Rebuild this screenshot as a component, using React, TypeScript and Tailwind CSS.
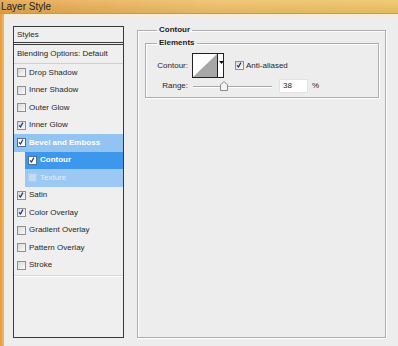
import React from "react";

type Row = {
  label: string;
  checked?: boolean;
  state?: "parent" | "active" | "disabled";
};

const rows: Row[] = [
  { label: "Drop Shadow" },
  { label: "Inner Shadow" },
  { label: "Outer Glow" },
  { label: "Inner Glow", checked: true },
  { label: "Bevel and Emboss", checked: true, state: "parent" },
  { label: "Contour", checked: true, state: "active" },
  { label: "Texture", state: "disabled" },
  { label: "Satin", checked: true },
  { label: "Color Overlay", checked: true },
  { label: "Gradient Overlay" },
  { label: "Pattern Overlay" },
  { label: "Stroke" },
];

const CheckBox = ({ checked, tone = "normal" }: { checked?: boolean; tone?: "normal" | "white" | "disabled" }) => {
  const box =
    tone === "white"
      ? "bg-white border-[#4d6f96]"
      : tone === "disabled"
      ? "bg-[#c4daf1] border-[#b2cbe4]"
      : "bg-gradient-to-br from-[#d9d9d9] to-[#fbfbfb] border-[#8e8f8f]";
  return (
    <span className={`relative w-[9px] h-[9px] shrink-0 border ${box}`}>
      {checked && (
        <svg viewBox="0 0 9 9" className="absolute inset-0 w-[7px] h-[7px]">
          <path d="M1.3 4.2 L3.2 6.4 L6.3 0.8" fill="none" stroke="#1f2f86" strokeWidth="1.5" />
        </svg>
      )}
    </span>
  );
};

const StyleRow = ({ row }: { row: Row }) => {
  if (row.state === "active" || row.state === "disabled") {
    const active = row.state === "active";
    return (
      <div className="h-[17.5px] pl-[11px] flex">
        <div
          className={`flex-1 flex items-center gap-[3px] pl-[3px] ${
            active ? "bg-[#3d97ed] text-white font-bold" : "bg-[#9cc9f3] text-[#e3eefa]"
          }`}
        >
          <CheckBox checked={row.checked} tone={active ? "white" : "disabled"} />
          <span>{row.label}</span>
        </div>
      </div>
    );
  }
  const parent = row.state === "parent";
  return (
    <div
      className={`h-[17.5px] flex items-center gap-[3px] pl-[3px] ${
        parent ? "bg-[#92c3f1] text-white font-bold" : "text-[#262626]"
      }`}
    >
      <CheckBox checked={row.checked} tone={parent ? "white" : "normal"} />
      <span>{row.label}</span>
    </div>
  );
};

const etched = "border border-[#adadad] shadow-[inset_1px_1px_0_#ffffff,1px_1px_0_#ffffff]";

export default function App() {
  return (
    <div
      className="w-[398px] h-[346px] flex flex-col overflow-hidden bg-[#ededed] text-[8px] text-[#262626]"
      style={{ fontFamily: '"Liberation Sans", Arial, sans-serif' }}
    >
      {/* title bar */}
      <div className="h-[14px] shrink-0 bg-gradient-to-r from-[#e6a54c] via-[#efc06a] to-[#f0c666] border-b border-[#c9964f]">
        <div className="h-full bg-gradient-to-b from-white/10 to-black/5 pl-[1px] text-[10px] leading-[13px] text-[#1c1c1c]">
          Layer Style
        </div>
      </div>
      <div className="flex flex-1">
        <div className="w-[4px] bg-gradient-to-r from-[#e29a3e] to-[#eeb866]" />
        <div className="flex-1 flex flex-col">
          <div className="h-[4px] bg-[#f6ecdc]" />
          <div className="flex items-start pl-[9px] pt-[8px]">
            {/* styles list */}
            <div className="w-[111px] h-[312px] border border-[#3a3a3a] bg-[#efefef] flex flex-col">
              <div className="h-[18px] pl-[3px] flex items-center border-b-[3px] border-double border-[#3a3a3a]">
                Styles
              </div>
              <div className="h-[19px] pl-[3px] flex items-center border-b border-[#cfcfcf]">
                Blending Options: Default
              </div>
              {rows.map((r) => (
                <StyleRow key={r.label} row={r} />
              ))}
              <div className="h-[1px] mt-[1px] bg-[#d6d6d6] shadow-[0_1px_0_#ffffff]" />
            </div>

            {/* contour panel */}
            <fieldset className={`ml-[13px] mt-[-1px] w-[249px] h-[313px] px-[7px] pr-[6px] pt-[3px] ${etched}`}>
              <legend className="ml-[12px] px-[2px] leading-[10px] font-bold text-[#1c1c1c]">Contour</legend>
              <fieldset className={`pb-[4px] ${etched}`}>
                <legend className="ml-[11px] px-[2px] leading-[10px] font-bold text-[#1c1c1c]">Elements</legend>
                <div className="pt-[5px] pl-[8px] flex flex-col">
                  <div className="h-[25px] flex items-center">
                    <span className="w-[34px] text-right">Contour:</span>
                    <div className="ml-[4px] w-[32px] h-[25px] flex border border-[#222222] bg-white">
                      <svg viewBox="0 0 24 23" preserveAspectRatio="none" className="w-[24px] h-[23px]">
                        <rect width="24" height="23" fill="#ffffff" />
                        <polygon points="0,23 24,0 24,23" fill="#a7a7a7" />
                      </svg>
                      <div className="relative flex-1 border-l border-[#222222]">
                        <svg viewBox="0 0 5 3" className="absolute left-[1px] top-[7px] w-[5px] h-[3px]">
                          <polygon points="0,0 5,0 2.5,3" fill="#111111" />
                        </svg>
                      </div>
                    </div>
                    <div className="ml-[11px] flex items-center gap-[2px]">
                      <CheckBox checked />
                      <span>Anti-aliased</span>
                    </div>
                  </div>
                  <div className="h-[15px] flex items-center">
                    <span className="w-[34px] text-right">Range:</span>
                    <div className="relative ml-[5px] w-[79px] h-[12px]">
                      <div className="absolute left-0 right-0 top-[6px] h-[1px] bg-[#a9a9a9] shadow-[0_1px_0_#ffffff]" />
                      <svg viewBox="0 0 8 10" className="absolute left-[27px] top-[1px] w-[8px] h-[10px]">
                        <polygon points="0.5,4 4,0.5 7.5,4 7.5,9.5 0.5,9.5" fill="#f3f3f3" stroke="#8b8b8b" strokeWidth="1" />
                      </svg>
                    </div>
                    <div className="ml-[7px] w-[29px] h-[14px] bg-white border border-[#e2e2e2] pl-[3px] flex items-center">
                      38
                    </div>
                    <span className="ml-[4px]">%</span>
                  </div>
                </div>
              </fieldset>
            </fieldset>
          </div>
        </div>
      </div>
    </div>
  );
}
